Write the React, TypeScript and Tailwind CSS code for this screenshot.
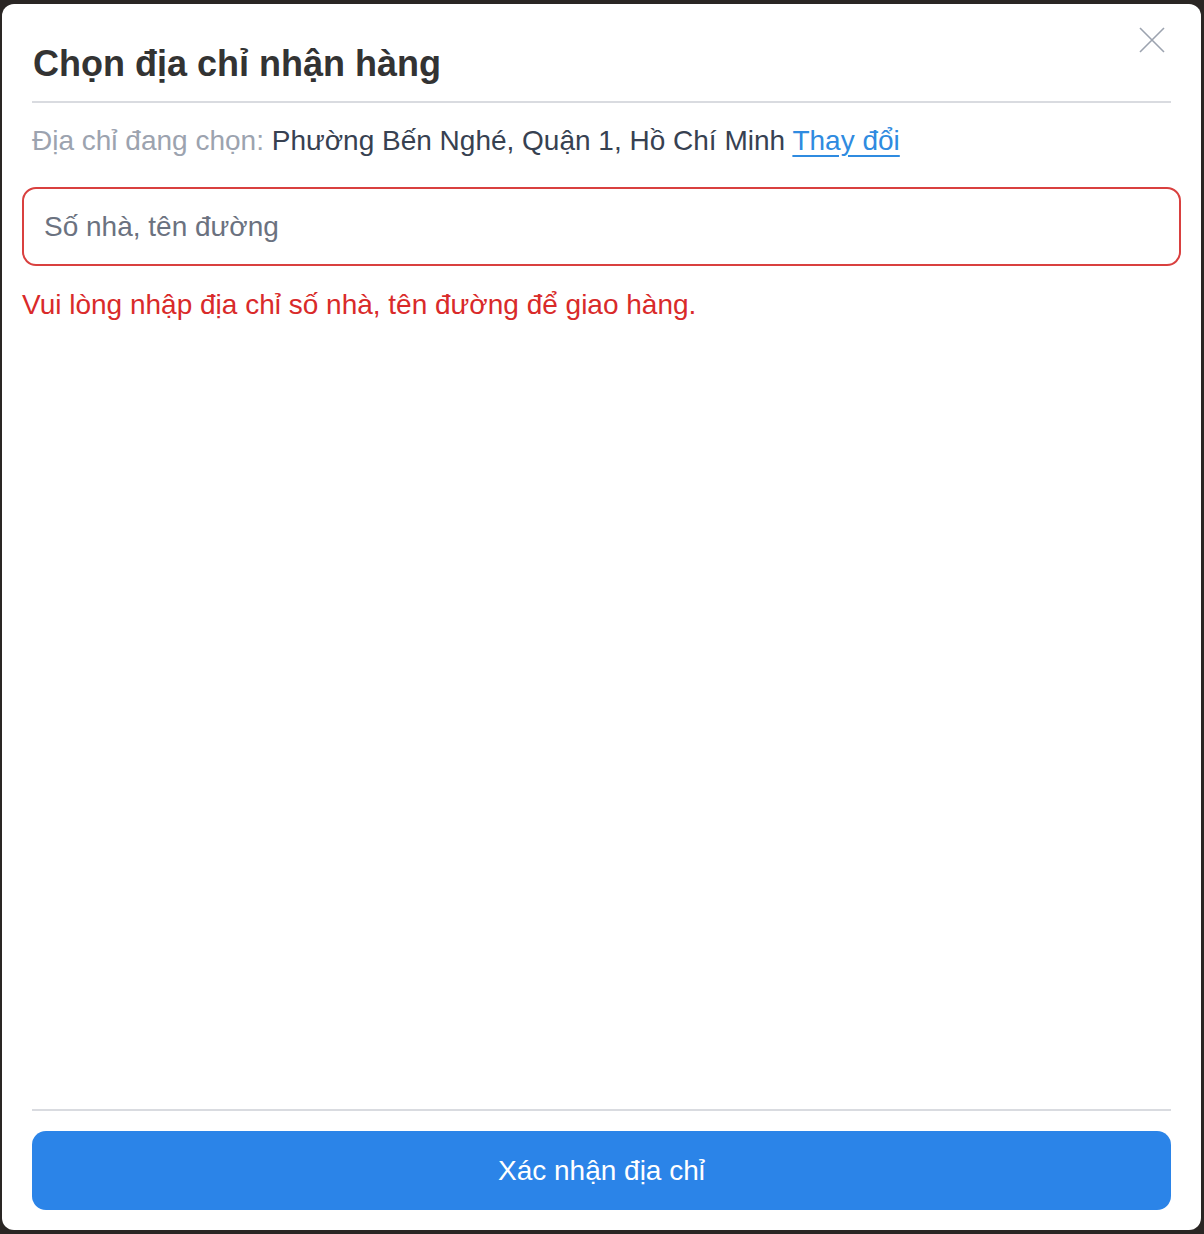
import React, { useState } from 'react';

const CloseIcon = () => (
  <svg width="26" height="26" viewBox="0 0 26 26" fill="none" stroke="currentColor" strokeWidth="1.6">
    <path d="M1 1L25 25M25 1L1 25" />
  </svg>
);

export default function App() {
  const [street, setStreet] = useState('');

  return (
    <div className="min-h-[1234px] w-full bg-[#2a2624] pt-[4px] px-[2px] pb-[4px] font-['Liberation_Sans',Arial,sans-serif]">
      <div className="flex h-[1226px] w-[1199px] flex-col rounded-[12px] bg-white">
        <div className="flex items-start justify-between pl-[31px] pr-[36px] pt-[40px]">
          <h2 className="text-[36px] font-bold leading-[40px] text-[#333333]">Chọn địa chỉ nhận hàng</h2>
          <button className="-mt-[17px] text-[#9ca3af]">
            <CloseIcon />
          </button>
        </div>
        <div className="mx-[30px] mt-[17px] h-[2px] bg-[#d9dbe0]" />
        <p className="mt-[20px] pl-[30px] text-[28px] leading-[36px]">
          <span className="text-[#9ca3af]">Địa chỉ đang chọn: </span>
          <span className="text-[#374151]">Phường Bến Nghé, Quận 1, Hồ Chí Minh </span>
          <a href="#" className="text-[#2f8be0] underline underline-offset-[5px]">Thay đổi</a>
        </p>
        <div className="mt-[28px] px-[20px]">
          <input
            className="h-[79px] w-full rounded-[14px] border-2 border-[#d9403f] px-[20px] text-[28px] text-[#374151] outline-none placeholder:text-[#6b7280]"
            placeholder="Số nhà, tên đường"
            value={street}
            onChange={e => setStreet(e.target.value)}
          />
          <p className="mt-[21px] text-[28px] leading-[36px] text-[#d92a2a]">Vui lòng nhập địa chỉ số nhà, tên đường để giao hàng.</p>
        </div>
        <div className="flex-1" />
        <div className="mx-[30px] h-[2px] bg-[#d9dbe0]" />
        <div className="px-[30px] pb-[20px] pt-[20px]">
          <button className="h-[79px] w-full rounded-[14px] bg-[#2b84e8] text-[28px] text-white">Xác nhận địa chỉ</button>
        </div>
      </div>
    </div>
  );
}
